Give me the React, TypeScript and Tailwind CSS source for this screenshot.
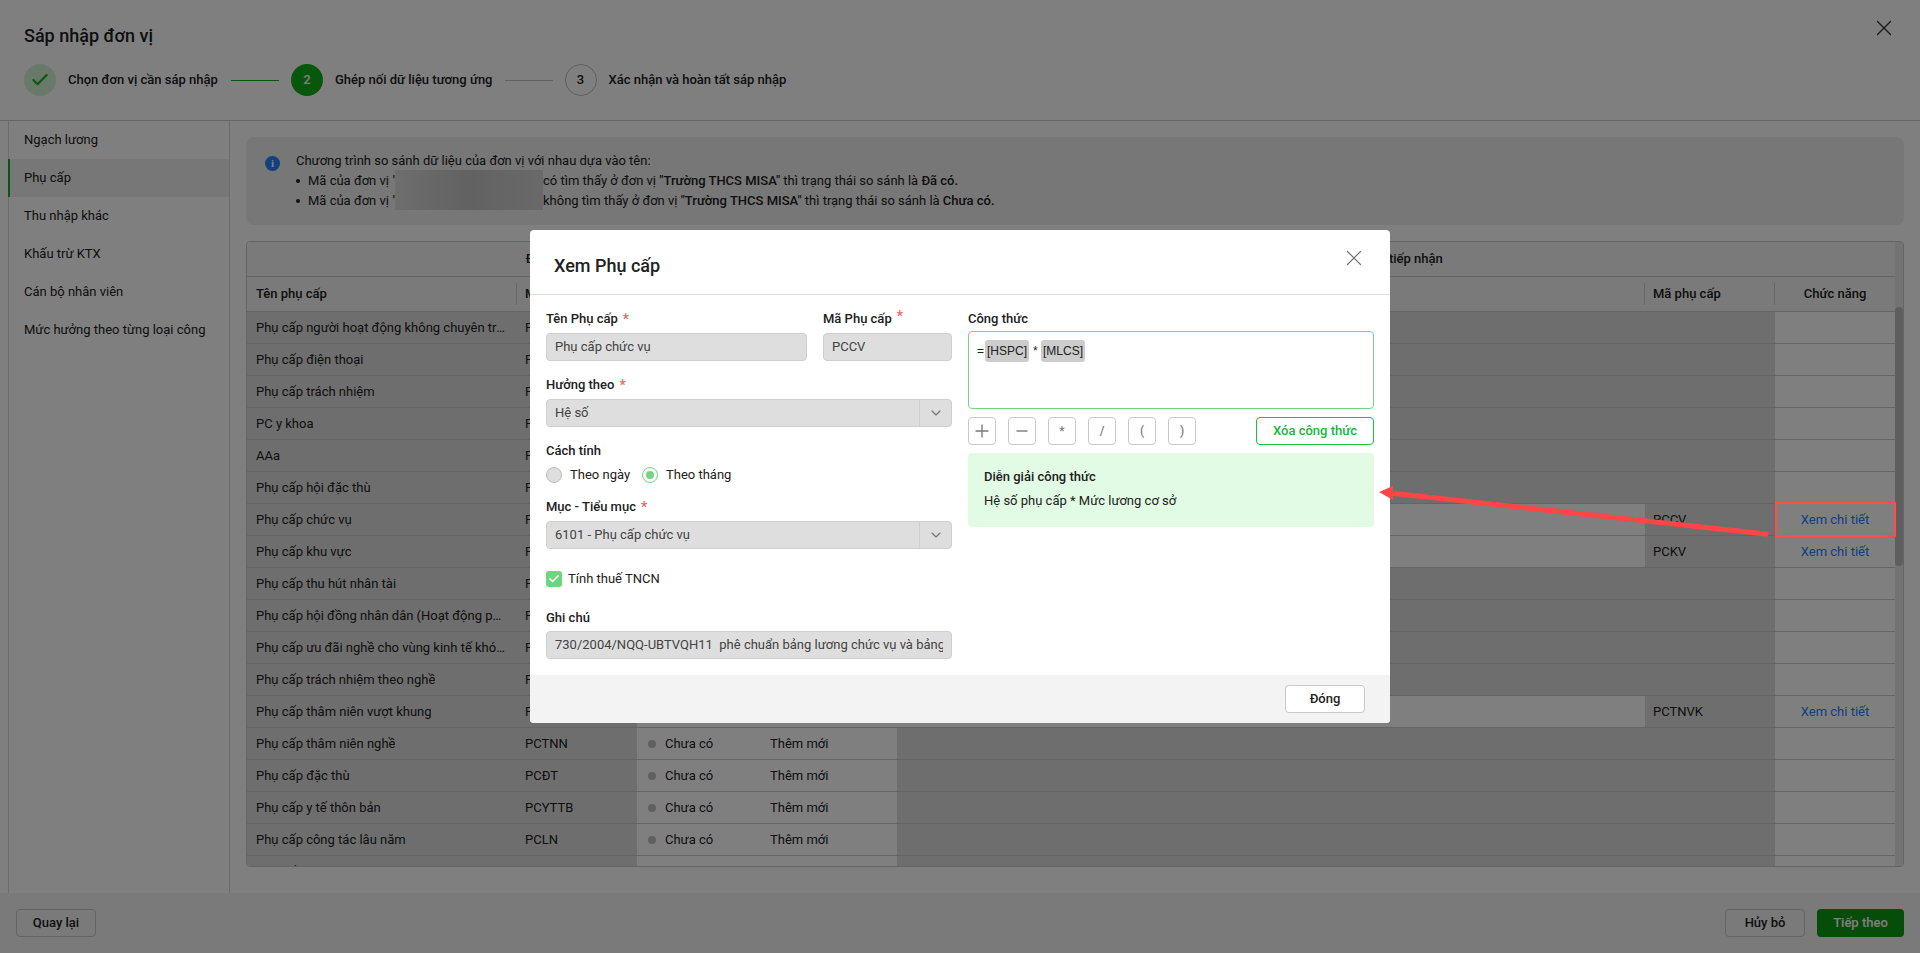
import { Check, ChevronDown, X } from "lucide-react";

type Row = {
  name: string;
  code: string;
  status: string;
  action: string;
  targetName?: string;
  targetCode?: string;
};

const steps = [
  { label: "Chọn đơn vị cần sáp nhập", state: "done" },
  { label: "Ghép nối dữ liệu tương ứng", state: "active" },
  { label: "Xác nhận và hoàn tất sáp nhập", state: "todo" },
];

const menu = ["Ngạch lương", "Phụ cấp", "Thu nhập khác", "Khấu trừ KTX", "Cán bộ nhân viên", "Mức hưởng theo từng loại công"];

const rows: Row[] = [
  { name: "Phụ cấp người hoạt động không chuyên trách", code: "PCKCT", status: "Chưa có", action: "Thêm mới" },
  { name: "Phụ cấp điện thoại", code: "PCDT", status: "Chưa có", action: "Thêm mới" },
  { name: "Phụ cấp trách nhiệm", code: "PCTN", status: "Chưa có", action: "Thêm mới" },
  { name: "PC y khoa", code: "PCYK", status: "Chưa có", action: "Thêm mới" },
  { name: "AAa", code: "PAA", status: "Chưa có", action: "Thêm mới" },
  { name: "Phụ cấp hội đặc thù", code: "PCHDT", status: "Chưa có", action: "Thêm mới" },
  { name: "Phụ cấp chức vụ", code: "PCCV", status: "Đã có", action: "Cập nhật", targetName: "Phụ cấp chức vụ", targetCode: "PCCV" },
  { name: "Phụ cấp khu vực", code: "PCKV", status: "Đã có", action: "Cập nhật", targetName: "Phụ cấp khu vực", targetCode: "PCKV" },
  { name: "Phụ cấp thu hút nhân tài", code: "PCTH", status: "Chưa có", action: "Thêm mới" },
  { name: "Phụ cấp hội đồng nhân dân (Hoạt động phí)", code: "PCHD", status: "Chưa có", action: "Thêm mới" },
  { name: "Phụ cấp ưu đãi nghề cho vùng kinh tế khó khăn", code: "PCUD", status: "Chưa có", action: "Thêm mới" },
  { name: "Phụ cấp trách nhiệm theo nghề", code: "PCTNN", status: "Chưa có", action: "Thêm mới" },
  { name: "Phụ cấp thâm niên vượt khung", code: "PCTNVK", status: "Đã có", action: "Cập nhật", targetName: "Phụ cấp thâm niên vượt khung", targetCode: "PCTNVK" },
  { name: "Phụ cấp thâm niên nghề", code: "PCTNN", status: "Chưa có", action: "Thêm mới" },
  { name: "Phụ cấp đặc thù", code: "PCĐT", status: "Chưa có", action: "Thêm mới" },
  { name: "Phụ cấp y tế thôn bản", code: "PCYTTB", status: "Chưa có", action: "Thêm mới" },
  { name: "Phụ cấp công tác lâu năm", code: "PCLN", status: "Chưa có", action: "Thêm mới" },
  { name: "Phụ cấp lưu động", code: "PCLD", status: "Chưa có", action: "Thêm mới" },
];

const columns = "grid grid-cols-[270px_120px_124px_136px_748px_130px_120px]";

function StepCircle({ state, index }: { state: string; index: number }) {
  if (state === "done") {
    return (
      <span className="flex h-8 w-8 items-center justify-center rounded-full bg-[#d0f3d4]">
        <Check className="h-5 w-5 text-[#12a824]" strokeWidth={2.5} />
      </span>
    );
  }
  if (state === "active") {
    return <span className="flex h-8 w-8 items-center justify-center rounded-full bg-[#0fb018] font-medium text-white">{index}</span>;
  }
  return <span className="flex h-8 w-8 items-center justify-center rounded-full border border-[#bdbdbd] font-medium">{index}</span>;
}

function Label({ children, raised }: { children: React.ReactNode; raised?: boolean }) {
  return (
    <div className="flex h-4 items-center font-medium leading-4 text-[#212121]">
      {children}
      {raised !== undefined && <span className={`ml-[5px] text-[14px] text-[#ff5c62] ${raised ? "-translate-y-[3px]" : ""}`}>*</span>}
    </div>
  );
}

function ReadonlyInput({ value, select, top = "mt-[6px]" }: { value: string; select?: boolean; top?: string }) {
  return (
    <div className={`${top} flex h-7 items-center rounded-[4px] border border-[#cfcfcf] bg-[#dedede] text-[#424242]`}>
      <span className="mx-2 min-w-0 flex-1 overflow-hidden whitespace-pre">{value}</span>
      {select && (
        <span className="flex h-full w-8 items-center justify-center border-l border-[#cfcfcf]">
          <ChevronDown className="h-4 w-4 text-[#757575]" strokeWidth={1.75} />
        </span>
      )}
    </div>
  );
}

function OpButton({ children }: { children: React.ReactNode }) {
  return (
    <button type="button" className="flex h-7 w-7 items-center justify-center rounded-[4px] border border-[#c9c9c9] bg-white text-[12px] font-medium text-[#7a7a7a]">
      {children}
    </button>
  );
}

function TableRow({ row }: { row: Row }) {
  return (
    <div className={`${columns} h-8 border-b border-[#c8c8c8]`}>
      <div className="flex items-center bg-[#dcdcdc] pl-[9px] pr-[10px]">
        <span className="truncate">{row.name}</span>
      </div>
      <div className="flex items-center bg-[#dcdcdc] pl-2">{row.code}</div>
      <div className="flex items-center gap-[9px] bg-white pl-[11px]">
        <span className={`h-2 w-2 rounded-full ${row.status === "Đã có" ? "bg-[#3cc04c]" : "bg-[#c0c0c0]"}`} />
        {row.status}
      </div>
      <div className="flex items-center bg-white pl-[9px]">{row.action}</div>
      <div className={`flex items-center pl-2 ${row.targetName ? "bg-white" : "bg-[#dcdcdc]"}`}>{row.targetName}</div>
      <div className="flex items-center bg-[#dcdcdc] pl-2">{row.targetCode}</div>
      <div className="flex items-center justify-center bg-white text-[#2680ff]">{row.targetCode && "Xem chi tiết"}</div>
    </div>
  );
}

function FormulaModal() {
  return (
    <div className="w-[860px] overflow-hidden rounded-[4px] bg-white text-[13px] text-[#212121]">
      <div className="flex h-[65px] items-start justify-between border-b border-[#e0e0e0] pl-6 pr-[23px]">
        <h2 className="mt-[24px] text-[18px] font-medium leading-6">Xem Phụ cấp</h2>
        <X className="mt-[15px] h-[26px] w-[26px] text-[#757575]" strokeWidth={1.1} />
      </div>

      <div className="flex gap-4 px-4 pb-4 pt-4">
        <div className="w-[406px]">
          <div className="flex gap-4">
            <div className="w-[261px]">
              <Label raised={false}>Tên Phụ cấp</Label>
              <ReadonlyInput value="Phụ cấp chức vụ" />
            </div>
            <div className="w-[129px]">
              <Label raised>Mã Phụ cấp</Label>
              <ReadonlyInput value="PCCV" />
            </div>
          </div>
          <div className="mt-4">
            <Label raised={false}>Hưởng theo</Label>
            <ReadonlyInput value="Hệ số" select />
          </div>
          <div className="mt-4">
            <Label>Cách tính</Label>
            <div className="mt-2 flex h-4 items-center">
              <span className="h-4 w-4 rounded-full border border-[#bdbdbd] bg-[#dedede]" />
              <span className="ml-2 w-[64px]">Theo ngày</span>
              <span className="ml-2 flex h-4 w-4 items-center justify-center rounded-full border border-[#74d683] bg-white">
                <span className="h-2 w-2 rounded-full bg-[#74d683]" />
              </span>
              <span className="ml-2">Theo tháng</span>
            </div>
          </div>
          <div className="mt-4">
            <Label raised={false}>Mục - Tiểu mục</Label>
            <ReadonlyInput value="6101 - Phụ cấp chức vụ" select />
          </div>
          <div className="mt-[22px] flex h-4 items-center gap-[6px]">
            <span className="flex h-4 w-4 items-center justify-center rounded-[3px] bg-[#6dd57d]">
              <Check className="h-3 w-3 text-white" strokeWidth={3.5} />
            </span>
            Tính thuế TNCN
          </div>
          <div className="mt-[23px]">
            <Label>Ghi chú</Label>
            <ReadonlyInput top="mt-[5px]" value="730/2004/NQQ-UBTVQH11  phê chuẩn bảng lương chức vụ và bảng phụ cấp chức vụ đối với cán bộ lãnh đạo" />
          </div>
        </div>

        <div className="w-[406px]">
          <Label>Công thức</Label>
          <div className="mt-1 flex h-[78px] items-start rounded-[4px] border border-[#74d683] pl-2 pt-2 font-['Liberation_Sans',Arial,sans-serif] text-[12px] leading-[22px]">
            <span className="w-2">=</span>
            <span className="rounded-[3px] bg-[#cccccc] px-[2px]">[HSPC]</span>
            <span className="ml-1 w-2">*</span>
            <span className="rounded-[3px] bg-[#cccccc] px-[2px]">[MLCS]</span>
          </div>
          <div className="mt-2 flex items-center gap-3">
            <OpButton>
              <svg viewBox="0 0 14 14" className="h-[14px] w-[14px]" stroke="currentColor" strokeWidth="1.4">
                <path d="M0.5 7h13M7 0.5v13" />
              </svg>
            </OpButton>
            <OpButton>
              <svg viewBox="0 0 14 14" className="h-[14px] w-[14px]" stroke="currentColor" strokeWidth="1.4">
                <path d="M1.5 7h11" />
              </svg>
            </OpButton>
            <OpButton>*</OpButton>
            <OpButton>/</OpButton>
            <OpButton>(</OpButton>
            <OpButton>)</OpButton>
            <button type="button" className="ml-auto h-7 w-[118px] rounded-[4px] border border-[#14c43a] font-medium text-[#14b83a]">
              Xóa công thức
            </button>
          </div>
          <div className="mt-2 h-[74px] rounded-[4px] bg-[#e2fbe4] px-4 pt-4">
            <div className="font-medium leading-4">Diễn giải công thức</div>
            <div className="mt-2 leading-4">Hệ số phụ cấp * Mức lương cơ sở</div>
          </div>
        </div>
      </div>

      <div className="flex h-12 items-center justify-end bg-[#f3f3f3] pr-[25px]">
        <button type="button" className="h-7 w-20 rounded-[4px] border border-[#c9c9c9] bg-white font-medium">
          Đóng
        </button>
      </div>
    </div>
  );
}

export default function App() {
  return (
    <div className="relative flex h-[953px] w-[1920px] flex-col overflow-hidden bg-white font-[Roboto,sans-serif] text-[13px] text-[#212121]">
      <header className="h-[121px] shrink-0 border-b border-[#c8c8c8] pl-6 pr-[23px]">
        <div className="flex items-start justify-between">
          <h1 className="mt-6 text-[18px] font-medium leading-6">Sáp nhập đơn vị</h1>
          <X className="mt-[15px] h-[26px] w-[26px] text-[#333333]" strokeWidth={1.1} />
        </div>
        <div className="mt-4 flex items-center">
          {steps.map((step, i) => (
            <div key={step.label} className="flex items-center">
              {i > 0 && <span className={`mx-3 h-px w-12 ${i === 1 ? "bg-[#0fb018]" : "bg-[#c0c0c0]"}`} />}
              <StepCircle state={step.state} index={i + 1} />
              <span className={`ml-3 font-medium ${i === 0 ? "w-[151px]" : ""}`}>{step.label}</span>
            </div>
          ))}
        </div>
      </header>

      <div className="flex min-h-0 flex-1">
        <nav className="ml-2 w-[222px] shrink-0 border-x border-[#d8d8d8]">
          {menu.map((item) => (
            <div
              key={item}
              className={item === "Phụ cấp" ? "-ml-px flex h-[38px] items-center border-l-2 border-[#0fb018] bg-[#eeeeee] pl-[14px]" : "flex h-[38px] items-center pl-[15px]"}
            >
              {item}
            </div>
          ))}
        </nav>

        <main className="min-w-0 flex-1 pl-4 pr-4 pt-4">
          <div className="relative flex h-[88px] rounded-lg bg-[#eeeeee] pl-[19px] pt-[14px]">
            <span className="mt-[5px] flex h-[15px] w-[15px] items-center justify-center rounded-full bg-[#2680ff] font-['Liberation_Serif',serif] text-[11px] font-bold text-white">
              i
            </span>
            <div className="ml-4 leading-5">
              <div>Chương trình so sánh dữ liệu của đơn vị với nhau dựa vào tên:</div>
              <div className="flex items-center">
                <span className="mr-2 h-1 w-1 rounded-full bg-[#212121]" />
                <span className="w-[87px] whitespace-pre">Mã của đơn vị "</span>
                <span className="w-[148px] shrink-0" />
                <span>
                  có tìm thấy ở đơn vị <b className="font-medium">"Trường THCS MISA"</b> thì trạng thái so sánh là <b className="font-medium">Đã có.</b>
                </span>
              </div>
              <div className="flex items-center">
                <span className="mr-2 h-1 w-1 rounded-full bg-[#212121]" />
                <span className="w-[87px] whitespace-pre">Mã của đơn vị "</span>
                <span className="w-[148px] shrink-0" />
                <span>
                  không tìm thấy ở đơn vị <b className="font-medium">"Trường THCS MISA"</b> thì trạng thái so sánh là <b className="font-medium">Chưa có.</b>
                </span>
              </div>
            </div>
            <div className="absolute left-[149px] top-[33px] h-10 w-[148px] bg-gradient-to-r from-[#dcdcdc] via-[#c4c4c4] to-[#d4d4d4]" />
          </div>

          <div className="mt-4 flex h-[626px] overflow-hidden rounded-[4px] border border-[#c8c8c8]">
            <div className="w-[1648px] shrink-0">
              <div className="flex h-[35px] border-b border-[#c8c8c8] bg-[#f5f5f5] font-medium">
                <div className="flex w-[650px] items-center justify-center">Đơn vị sáp nhập</div>
                <div className="flex w-[998px] items-center justify-center">Đơn vị tiếp nhận</div>
              </div>
              <div className={`${columns} h-[35px] border-b border-[#c8c8c8] bg-[#f5f5f5] font-medium`}>
                <div className="flex items-center justify-between pl-[9px]">
                  Tên phụ cấp
                  <span className="h-[22px] w-px bg-[#cfcfcf]" />
                </div>
                <div className="flex items-center pl-2">Mã phụ cấp</div>
                <div className="flex items-center pl-[11px]">Trạng thái</div>
                <div className="flex items-center pl-[9px]">Hành động</div>
                <div className="flex items-center justify-between pl-2">
                  Tên phụ cấp
                  <span className="h-[22px] w-px bg-[#cfcfcf]" />
                </div>
                <div className="flex items-center justify-between pl-2">
                  Mã phụ cấp
                  <span className="h-[22px] w-px bg-[#cfcfcf]" />
                </div>
                <div className="flex items-center justify-center">Chức năng</div>
              </div>
              {rows.map((row, i) => (
                <TableRow key={`${row.code}-${i}`} row={row} />
              ))}
            </div>
            <div className="w-2 shrink-0 bg-[#e6e6e6]">
              <div className="mt-[65px] h-[259px] rounded-full bg-[#bdbdbd]" />
            </div>
          </div>
        </main>
      </div>

      <footer className="flex h-[60px] shrink-0 items-center justify-between bg-[#f5f5f5] pl-4 pr-4">
        <button type="button" className="h-7 w-20 rounded-[4px] border border-[#c9c9c9] font-medium">
          Quay lại
        </button>
        <div className="flex gap-3">
          <button type="button" className="h-7 w-20 rounded-[4px] border border-[#c9c9c9] font-medium">
            Hủy bỏ
          </button>
          <button type="button" className="h-7 w-[87px] rounded-[4px] bg-[#0f9a14] font-medium text-white">
            Tiếp theo
          </button>
        </div>
      </footer>

      {/* dialog backdrop and the dialog itself */}
      <div className="absolute inset-0 flex items-center justify-center bg-[rgba(0,0,0,0.5)]">
        <FormulaModal />
      </div>

      {/* red annotation drawn on the screenshot */}
      <div className="absolute left-[1775px] top-[502px] h-[35px] w-[121px] border-2 border-[#ff4c4c]" />
      <svg className="absolute left-[1370px] top-[480px]" width="410" height="70" viewBox="0 0 410 70">
        <path d="M396 54 L20 13" stroke="#ff4545" strokeWidth="5" strokeLinecap="round" fill="none" />
        <path d="M9 12 L23 6 L23 20 Z" fill="#ff4545" />
      </svg>
    </div>
  );
}
